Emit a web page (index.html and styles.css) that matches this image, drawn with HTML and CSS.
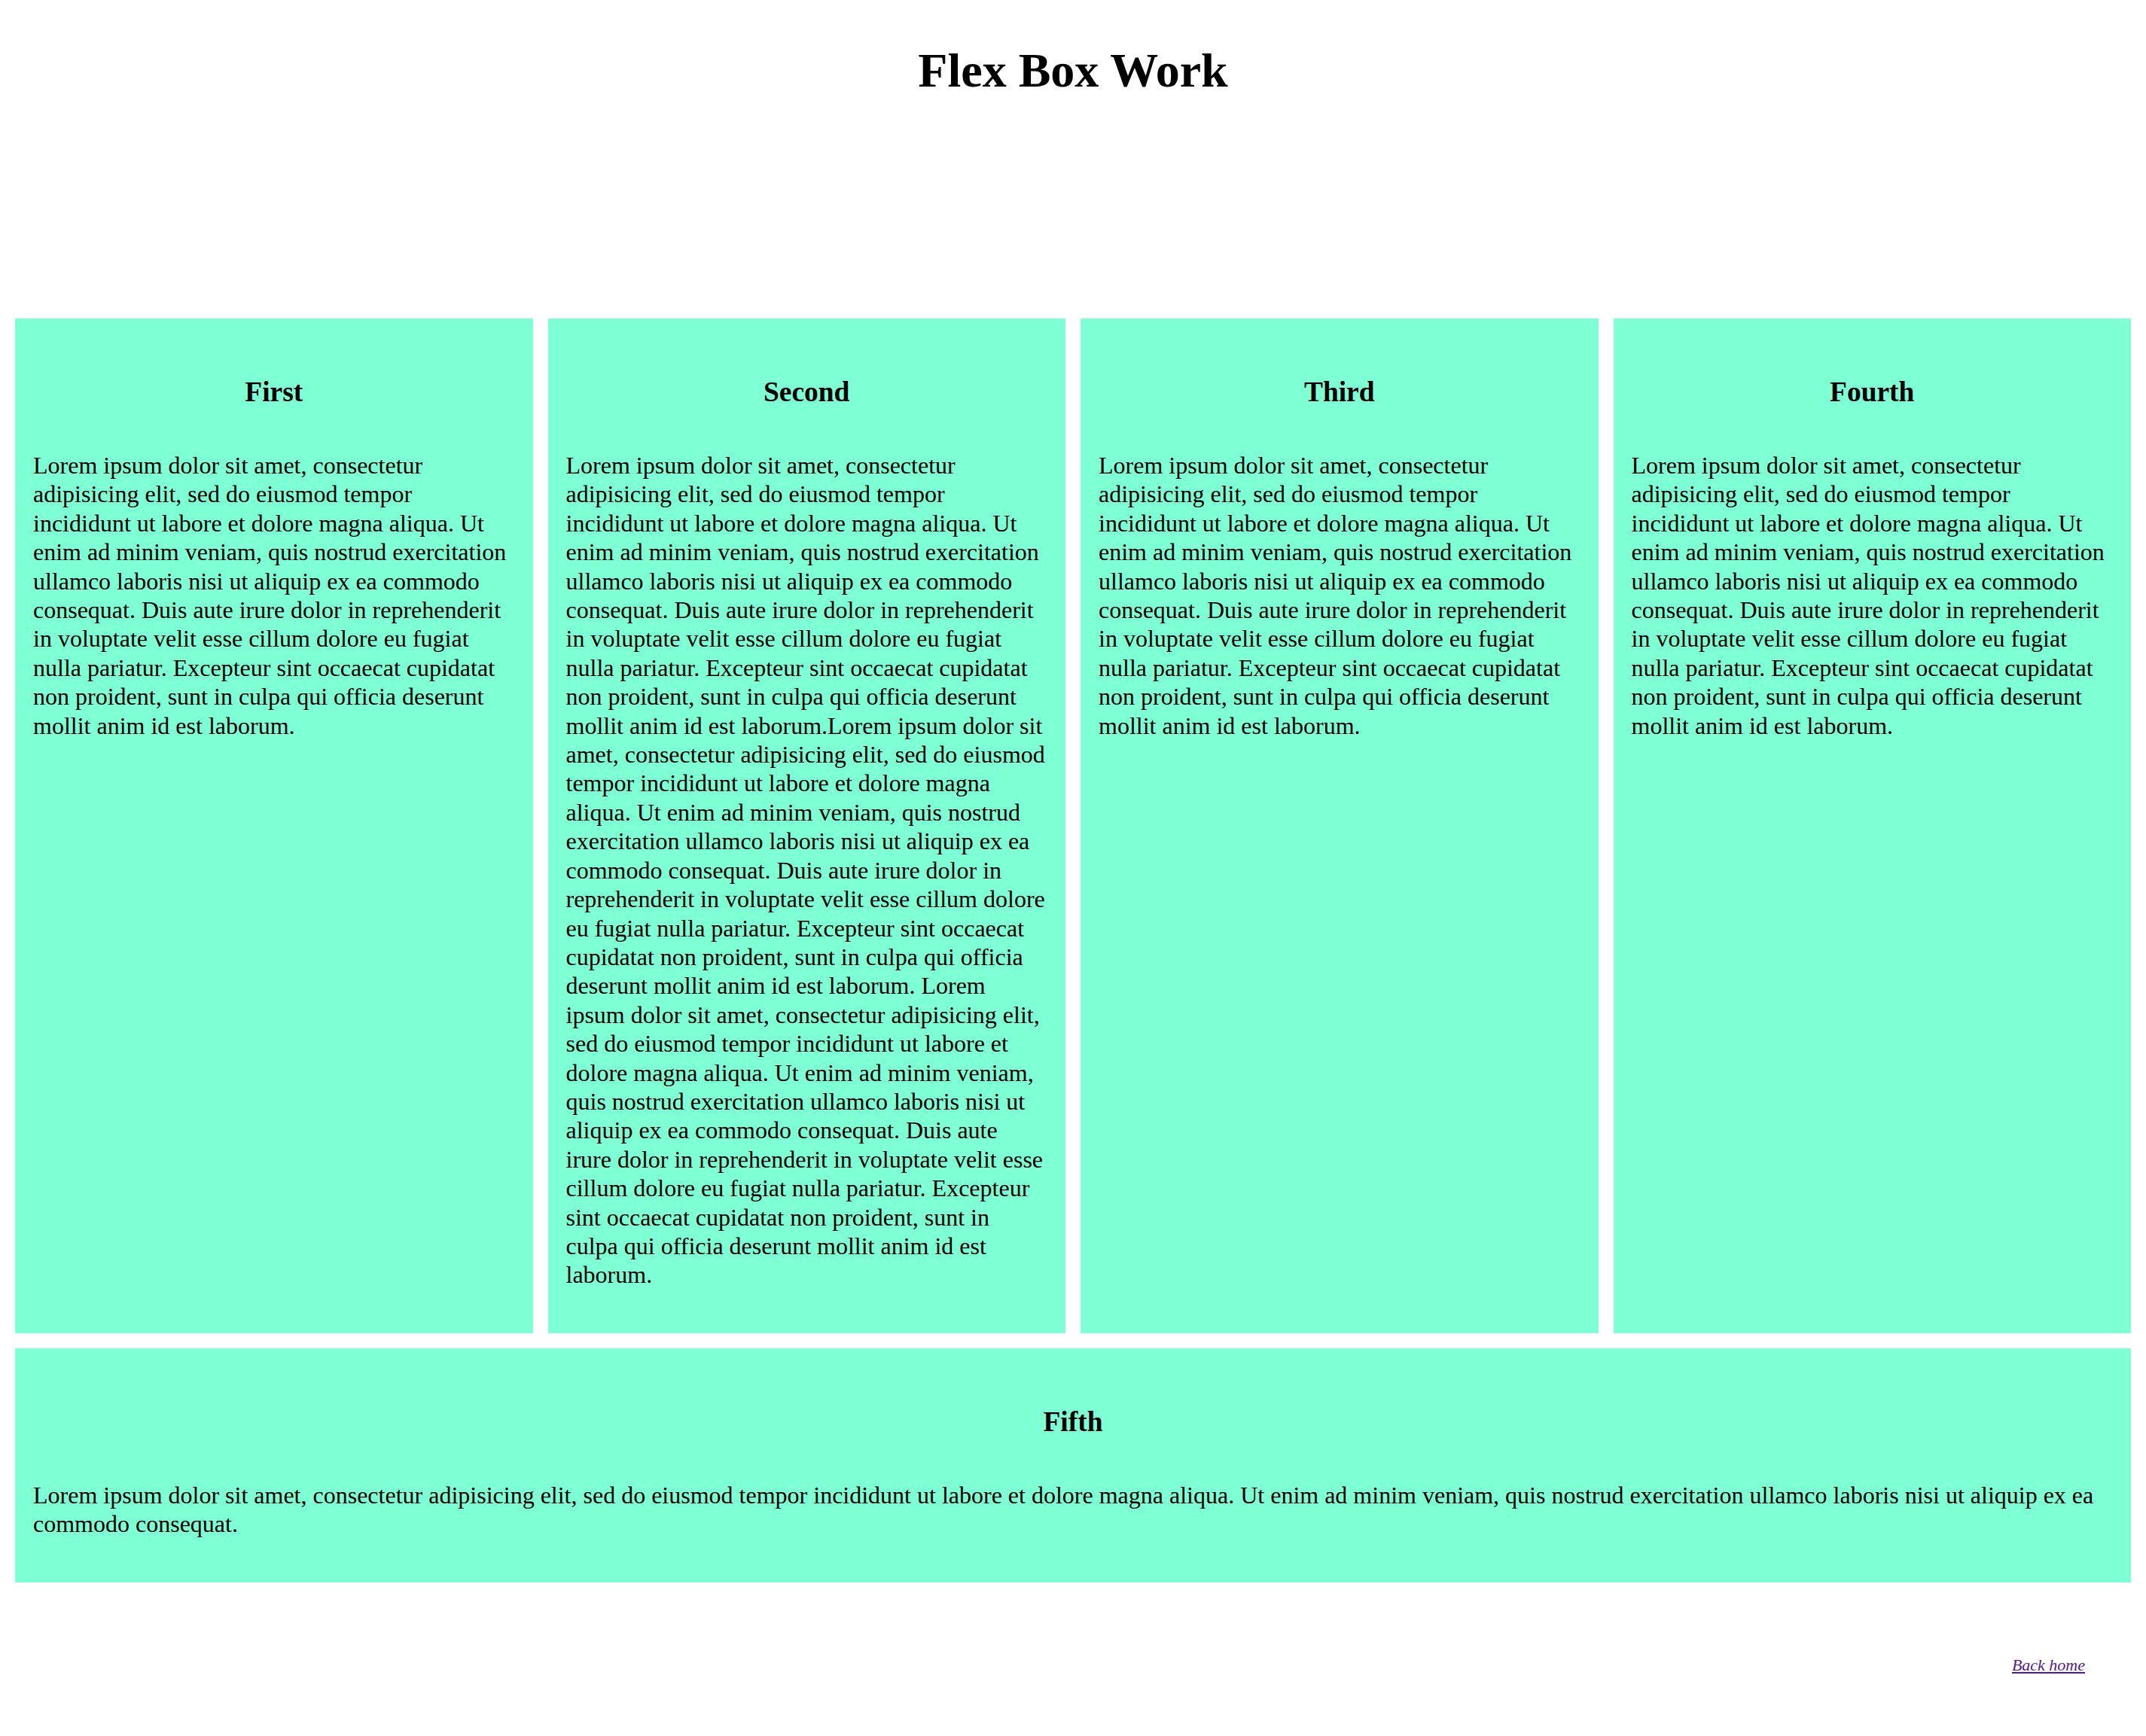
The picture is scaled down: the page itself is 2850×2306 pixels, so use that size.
FILE: index.html
```html
<!DOCTYPE html>
<html lang="en">
<head>
<meta charset="utf-8">
<title>Flex Box Work</title>
<link rel="stylesheet" href="styles.css">
</head>
<body>
<h1 class="title">Flex Box Work</h1>
<main class="layout">
  <div class="row">
    <section class="box">
      <h3 class="box-title">First</h3>
      <p class="box-text">Lorem ipsum dolor sit amet, consectetur adipisicing elit, sed do eiusmod tempor incididunt ut labore et dolore magna aliqua. Ut enim ad minim veniam, quis nostrud exercitation ullamco laboris nisi ut aliquip ex ea commodo consequat. Duis aute irure dolor in reprehenderit in voluptate velit esse cillum dolore eu fugiat nulla pariatur. Excepteur sint occaecat cupidatat non proident, sunt in culpa qui officia deserunt mollit anim id est laborum.</p>
    </section>
    <section class="box">
      <h3 class="box-title">Second</h3>
      <p class="box-text">Lorem ipsum dolor sit amet, consectetur adipisicing elit, sed do eiusmod tempor incididunt ut labore et dolore magna aliqua. Ut enim ad minim veniam, quis nostrud exercitation ullamco laboris nisi ut aliquip ex ea commodo consequat. Duis aute irure dolor in reprehenderit in voluptate velit esse cillum dolore eu fugiat nulla pariatur. Excepteur sint occaecat cupidatat non proident, sunt in culpa qui officia deserunt mollit anim id est laborum.Lorem ipsum dolor sit amet, consectetur adipisicing elit, sed do eiusmod tempor incididunt ut labore et dolore magna aliqua. Ut enim ad minim veniam, quis nostrud exercitation ullamco laboris nisi ut aliquip ex ea commodo consequat. Duis aute irure dolor in reprehenderit in voluptate velit esse cillum dolore eu fugiat nulla pariatur. Excepteur sint occaecat cupidatat non proident, sunt in culpa qui officia deserunt mollit anim id est laborum. Lorem ipsum dolor sit amet, consectetur adipisicing elit, sed do eiusmod tempor incididunt ut labore et dolore magna aliqua. Ut enim ad minim veniam, quis nostrud exercitation ullamco laboris nisi ut aliquip ex ea commodo consequat. Duis aute irure dolor in reprehenderit in voluptate velit esse cillum dolore eu fugiat nulla pariatur. Excepteur sint occaecat cupidatat non proident, sunt in culpa qui officia deserunt mollit anim id est laborum.</p>
    </section>
    <section class="box">
      <h3 class="box-title">Third</h3>
      <p class="box-text">Lorem ipsum dolor sit amet, consectetur adipisicing elit, sed do eiusmod tempor incididunt ut labore et dolore magna aliqua. Ut enim ad minim veniam, quis nostrud exercitation ullamco laboris nisi ut aliquip ex ea commodo consequat. Duis aute irure dolor in reprehenderit in voluptate velit esse cillum dolore eu fugiat nulla pariatur. Excepteur sint occaecat cupidatat non proident, sunt in culpa qui officia deserunt mollit anim id est laborum.</p>
    </section>
    <section class="box">
      <h3 class="box-title">Fourth</h3>
      <p class="box-text">Lorem ipsum dolor sit amet, consectetur adipisicing elit, sed do eiusmod tempor incididunt ut labore et dolore magna aliqua. Ut enim ad minim veniam, quis nostrud exercitation ullamco laboris nisi ut aliquip ex ea commodo consequat. Duis aute irure dolor in reprehenderit in voluptate velit esse cillum dolore eu fugiat nulla pariatur. Excepteur sint occaecat cupidatat non proident, sunt in culpa qui officia deserunt mollit anim id est laborum.</p>
    </section>
  </div>
  <section class="box">
    <h3 class="box-title">Fifth</h3>
    <p class="box-text">Lorem ipsum dolor sit amet, consectetur adipisicing elit, sed do eiusmod tempor incididunt ut labore et dolore magna aliqua. Ut enim ad minim veniam, quis nostrud exercitation ullamco laboris nisi ut aliquip ex ea commodo consequat.</p>
  </section>
</main>
<footer class="footer">
  <a class="back-link" href="#">Back home</a>
</footer>
</body>
</html>
```

FILE: styles.css
```css
html, body {
  margin: 0;
  padding: 0;
  background: #ffffff;
}

body {
  font-family: "Liberation Serif", "Times New Roman", serif;
  color: #000000;
}

.title {
  margin: 57px 0 0;
  font-size: 64px;
  line-height: 74px;
  font-weight: bold;
  text-align: center;
}

.layout {
  margin-top: 292px;
  padding: 0 20px;
  display: flex;
  flex-direction: column;
  gap: 20px;
}

.row {
  display: flex;
  gap: 20px;
  align-items: stretch;
}

.row > .box {
  flex: 1 1 0;
  min-width: 0;
}

.box {
  background: #7fffd4;
  padding: 24px;
}

.box-title {
  margin: 52px 0 56px;
  font-size: 37.44px;
  line-height: 44px;
  font-weight: bold;
  text-align: center;
}

.box-text {
  margin: 0 0 34px;
  font-size: 32px;
  line-height: 38.4px;
}

.footer {
  display: flex;
  justify-content: flex-end;
  margin-top: 97px;
  padding-right: 81px;
}

.back-link {
  font-size: 22px;
  line-height: 26px;
  font-style: italic;
  color: #551a8b;
  text-decoration: underline;
}
```
